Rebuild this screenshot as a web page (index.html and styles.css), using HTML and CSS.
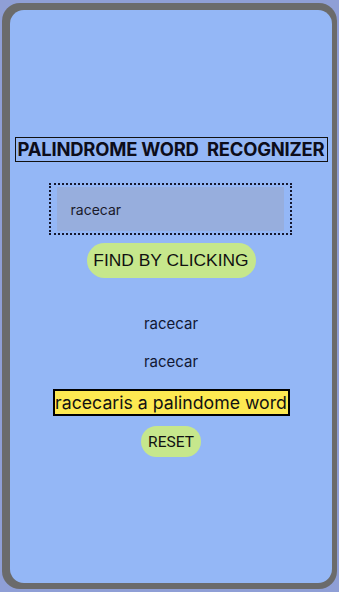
FILE: index.html
```html
<!DOCTYPE html>
<html>
<head>
<meta charset="utf-8">
<link rel="stylesheet" href="styles.css">
</head>
<body>
<div class="frame">
  <div class="screen">
    <div class="title">PALINDROME WORD&nbsp; RECOGNIZER</div>
    <div class="input-wrap"><div class="input">racecar</div></div>
    <div class="btn find">FIND BY CLICKING</div>
    <div class="word w1">racecar</div>
    <div class="word w2">racecar</div>
    <div class="result">racecaris a palindome word</div>
    <div class="btn reset">RESET</div>
  </div>
</div>
</body>
</html>
```
FILE: styles.css
```css
html, body { margin: 0; padding: 0; }
body {
  width: 339px;
  height: 592px;
  background: #8f9fd6;
  font-family: Roboto, "Liberation Sans", sans-serif;
  overflow: hidden;
}
.frame {
  margin: 3px 2px 0 2px;
  height: 586px;
  box-sizing: border-box;
  background: #6b6b6b;
  border-radius: 18px;
  padding: 7px 5px 6px 8px;
}
.screen {
  height: 100%;
  background: #94b7f6;
  border-radius: 14px;
  display: flex;
  flex-direction: column;
  align-items: center;
  color: #111;
}
.title {
  margin-top: 127px;
  width: 313px;
  height: 25px;
  box-sizing: border-box;
  border: 1.5px solid #111;
  font-family: Inter, Roboto, sans-serif;
  font-weight: 700;
  font-size: 18.4px;
  line-height: 22px;
  text-align: center;
  white-space: nowrap;
  color: #0d0d1a;
  letter-spacing: -0.2px;
}
.input-wrap {
  margin-top: 21px;
  width: 243px;
  height: 52px;
  box-sizing: border-box;
  border: 2px dotted #14172e;
  padding: 2px 6px;
  margin-left: -2px;
}
.input {
  height: 100%;
  background: #97aedd;
  font-family: Inter, Roboto, sans-serif;
  font-size: 14px;
  color: #1a1a2a;
  padding-left: 14px;
  display: flex;
  align-items: center;
}
.btn {
  background: #c6e78c;
  border-radius: 18px;
  display: flex;
  align-items: center;
  justify-content: center;
  color: #111;
}
.find {
  margin-top: 8px;
  width: 169px;
  height: 35px;
  font-size: 17.4px;
  font-family: "Liberation Sans", Arial, sans-serif;
}
.word {
  font-family: Inter, Roboto, sans-serif;
  font-size: 15px;
  line-height: 18px;
  color: #111833;
}
.w1 { margin-top: 37px; }
.w2 { margin-top: 20px; }
.result {
  margin-top: 18px;
  width: 237px;
  height: 27px;
  box-sizing: border-box;
  border: 2px solid #000;
  background: #fde951;
  font-family: Inter, Roboto, sans-serif;
  font-size: 17.7px;
  line-height: 23px;
  text-align: center;
  white-space: nowrap;
  color: #111;
}
.reset {
  margin-top: 10px;
  width: 60px;
  height: 31px;
  font-size: 15.5px;
  font-family: Roboto, sans-serif;
  border-radius: 16px;
}
```
